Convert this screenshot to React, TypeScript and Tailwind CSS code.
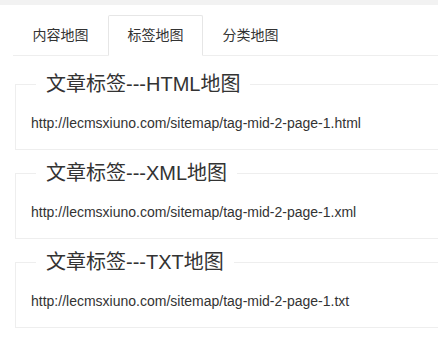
import React from 'react';

const tabs = ['内容地图', '标签地图', '分类地图'];

const maps = [
  { title: '文章标签---HTML地图', url: 'http://lecmsxiuno.com/sitemap/tag-mid-2-page-1.html' },
  { title: '文章标签---XML地图', url: 'http://lecmsxiuno.com/sitemap/tag-mid-2-page-1.xml' },
  { title: '文章标签---TXT地图', url: 'http://lecmsxiuno.com/sitemap/tag-mid-2-page-1.txt' },
];

const App: React.FC = () => {
  return (
    <div
      className="h-[349px] w-full overflow-hidden bg-white text-[#333]"
      style={{ fontFamily: '"Liberation Sans", "Noto Sans CJK SC", sans-serif' }}
    >
      <div className="h-[5px] bg-[#f2f2f2]" />
      <div className="w-[480px]">
        <ul className="mt-[10px] ml-[13px] flex border-b border-[#eee]">
          {tabs.map((t, i) => (
            <li
              key={t}
              className={
                i === 1
                  ? '-mb-px min-w-[95px] rounded-t-[2px] border border-[#e6e6e6] border-b-white px-[14px] text-center text-[14px] leading-[39px]'
                  : '-mb-px min-w-[95px] border border-transparent px-[14px] text-center text-[14px] leading-[39px]'
              }
            >
              {t}
            </li>
          ))}
        </ul>
        <div className="pt-[15px]">
          {maps.map((m) => (
            <fieldset key={m.title} className="mb-[10px] ml-[15px] min-w-0 border border-[#eee] p-0">
              <legend className="ml-[20px] px-[10px] text-[20px] leading-[26px]">{m.title}</legend>
              <div className="p-[15px] text-[14px] leading-[22px]">{m.url}</div>
            </fieldset>
          ))}
        </div>
      </div>
    </div>
  );
};

export default App;
